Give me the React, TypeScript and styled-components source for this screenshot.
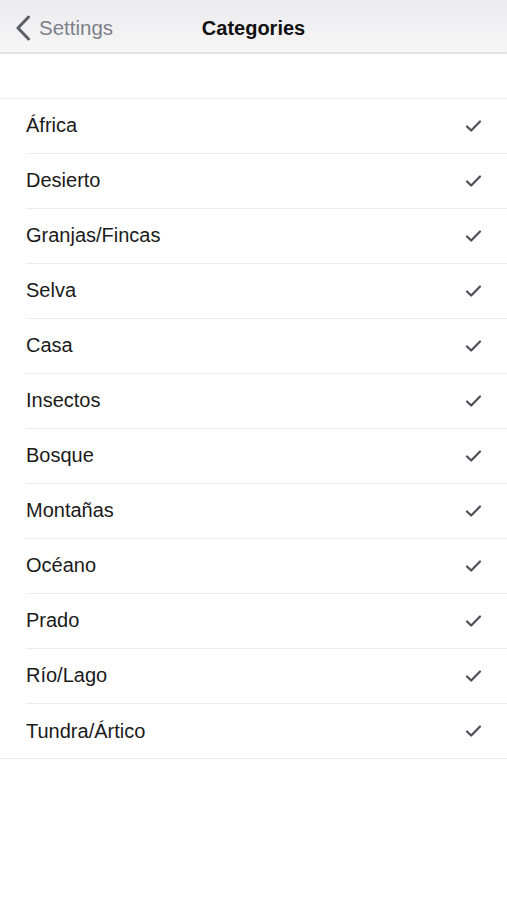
import React from 'react';
import styled, { createGlobalStyle } from 'styled-components';

const GlobalStyle = createGlobalStyle`
  html, body {
    margin: 0;
    padding: 0;
    background: #ffffff;
  }
  body {
    font-family: 'Liberation Sans', Arial, sans-serif;
    -webkit-font-smoothing: antialiased;
  }
`;

const categories = [
  'África',
  'Desierto',
  'Granjas/Fincas',
  'Selva',
  'Casa',
  'Insectos',
  'Bosque',
  'Montañas',
  'Océano',
  'Prado',
  'Río/Lago',
  'Tundra/Ártico',
];

const Screen = styled.div`
  width: 507px;
  min-height: 900px;
  background: #ffffff;
`;

const NavBar = styled.header`
  position: relative;
  height: 54px;
  padding-top: 4px;
  box-sizing: border-box;
  display: flex;
  align-items: center;
  justify-content: center;
  background: linear-gradient(#ebebed, #f6f6f7);
  border-bottom: 2px solid #e4e4e6;
`;

const BackButton = styled.div`
  position: absolute;
  left: 15px;
  top: 4px;
  bottom: 0;
  display: flex;
  align-items: center;
  gap: 8px;
  color: #7c8089;
  font-size: 20.5px;
`;

const Title = styled.h1`
  margin: 0;
  font-size: 20px;
  font-weight: 700;
  color: #111111;
`;

const List = styled.ul`
  list-style: none;
  margin: 44px 0 0;
  padding: 0;
  border-top: 1px solid #ededed;
  border-bottom: 1px solid #ededed;
`;

const Row = styled.li<{ $last?: boolean }>`
  height: ${(p) => (p.$last ? '54px' : '55px')};
  display: flex;
  align-items: center;
  padding-left: 26px;
`;

const RowInner = styled.div<{ $last?: boolean }>`
  flex: 1;
  height: 100%;
  display: flex;
  align-items: center;
  justify-content: space-between;
  padding-right: 25px;
  padding-bottom: ${(p) => (p.$last ? '0' : '1px')};
  box-sizing: border-box;
  border-bottom: ${(p) => (p.$last ? 'none' : '1px solid #ededed')};
`;

const Label = styled.span`
  font-size: 20px;
  color: #1a1a1a;
`;

function Chevron() {
  return (
    <svg width="16" height="26" viewBox="0 0 16 26">
      <path
        d="M13.5 2 L3 13 L13.5 24"
        fill="none"
        stroke="#5a5e68"
        strokeWidth="3"
        strokeLinecap="round"
        strokeLinejoin="round"
      />
    </svg>
  );
}

function Check() {
  return (
    <svg width="17" height="14" viewBox="0 0 17 14">
      <path
        d="M2 7.5 L6.2 11.5 L15 2.5"
        fill="none"
        stroke="#4b5058"
        strokeWidth="2.2"
        strokeLinecap="round"
        strokeLinejoin="round"
      />
    </svg>
  );
}

export default function App() {
  return (
    <Screen>
      <GlobalStyle />
      <NavBar>
        <BackButton>
          <Chevron />
          <span>Settings</span>
        </BackButton>
        <Title>Categories</Title>
      </NavBar>
      <List>
        {categories.map((name, i) => {
          const last = i === categories.length - 1;
          return (
            <Row key={name} $last={last}>
              <RowInner $last={last}>
                <Label>{name}</Label>
                <Check />
              </RowInner>
            </Row>
          );
        })}
      </List>
    </Screen>
  );
}
